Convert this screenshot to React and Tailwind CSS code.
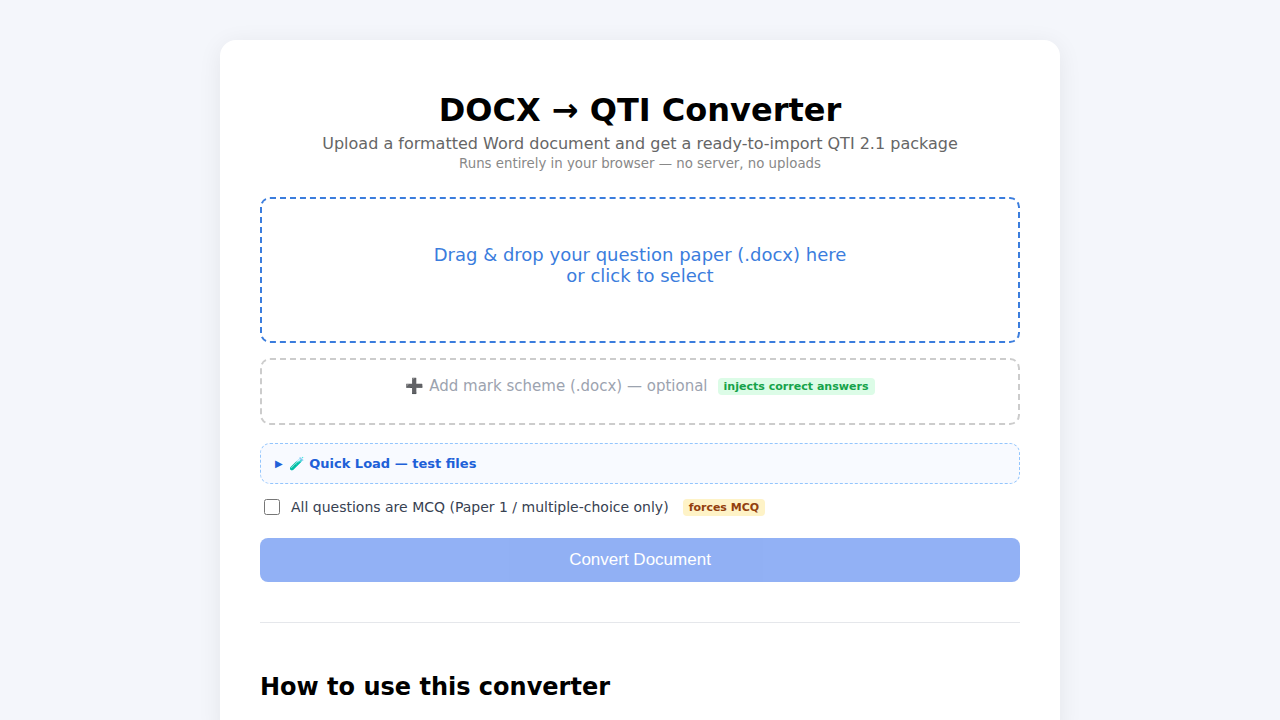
import React from 'react'

export default function App() {
  return (
    <div className="h-screen overflow-hidden bg-[#f4f6fb] pt-10 font-['DejaVu_Sans',sans-serif]">
      <div className="mx-auto w-[840px] rounded-2xl bg-white p-10 shadow-[0_4px_24px_rgba(0,0,0,0.07)]">

        {/* Header */}
        <h1 className="mt-[9px] text-center text-[32px] leading-[42px] font-bold text-black">DOCX → QTI Converter</h1>
        <p className="mt-[3px] text-center text-base leading-[19px] text-[#666666]">
          Upload a formatted Word document and get a ready-to-import QTI 2.1 package
        </p>
        <p className="mt-[2px] text-center text-[13.33px] leading-[17px] text-[#888888]">
          Runs entirely in your browser — no server, no uploads
        </p>

        {/* Question paper drop */}
        <div className="mt-[25px] h-[146px] rounded-[10px] border-2 border-dashed border-[#3b7ddd] pt-[45px] text-center text-lg leading-[21px] text-[#3b7ddd]">
          Drag &amp; drop your question paper (.docx) here
          <br />
          or click to select
        </div>

        {/* Mark scheme drop */}
        <div className="mt-[15px] flex h-[67px] items-start justify-center rounded-[10px] border-2 border-dashed border-[#cccccc] pt-[17px] text-[15px] leading-[18px] text-[#9ca3af]">
          <span><span className="text-[#555555]">➕</span> Add mark scheme (.docx) — optional</span>
          <span className="mt-[1px] ml-[10px] rounded-[4px] bg-[#dcfce7] px-[6px] text-[11.05px] leading-[17px] font-bold text-[#16a34a]">
            injects correct answers
          </span>
        </div>

        {/* Quick load */}
        <div className="mt-[18px] flex h-[41px] items-center rounded-[10px] border border-dashed border-[#93c5fd] bg-[#f8faff] px-[14px] text-[13px] font-bold text-[#2060d8]">
          <span className="mr-[6px] text-[10px]">▶</span>
          <span>🧪 Quick Load — test files</span>
        </div>

        {/* MCQ option */}
        <label className="mt-[15px] flex h-[16px] items-center pl-1 text-sm text-[#374151]">
          <input type="checkbox" className="m-0 h-4 w-4" />
          <span className="ml-[11px]">All questions are MCQ (Paper 1 / multiple-choice only)</span>
          <span className="ml-[14px] rounded-[4px] bg-[#fef3c7] px-[6px] text-[11px] leading-[17px] font-bold text-[#92400e]">
            forces MCQ
          </span>
        </label>

        {/* Convert */}
        <button
          disabled
          className="mt-[23px] block h-11 w-full rounded-lg bg-[#2563eb] text-center font-['Liberation_Sans',sans-serif] text-[17px] text-white opacity-50"
        >
          Convert Document
        </button>

        <hr className="mt-10 border-t border-[#e5e7eb]" />

        <h2 className="mt-[48px] text-2xl leading-[32px] font-bold text-black">How to use this converter</h2>
      </div>
    </div>
  )
}
